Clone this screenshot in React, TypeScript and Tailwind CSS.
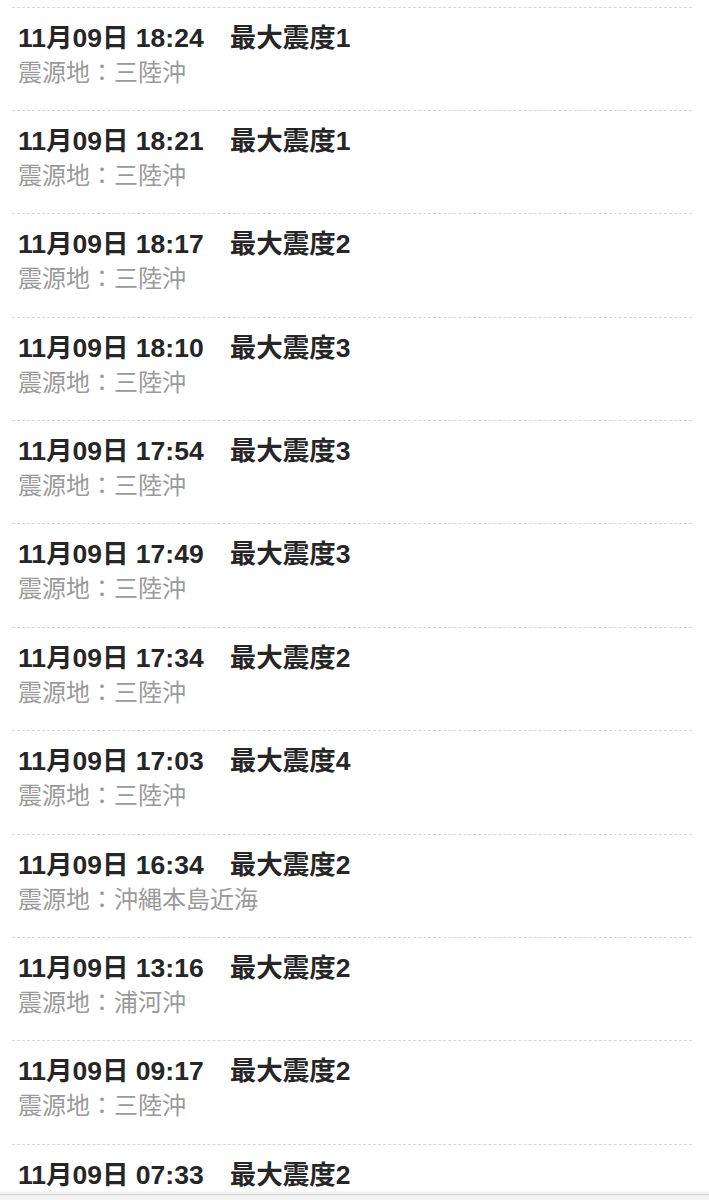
const quakes = [
  { time: "18:24", max: "1", place: "三陸沖" },
  { time: "18:21", max: "1", place: "三陸沖" },
  { time: "18:17", max: "2", place: "三陸沖" },
  { time: "18:10", max: "3", place: "三陸沖" },
  { time: "17:54", max: "3", place: "三陸沖" },
  { time: "17:49", max: "3", place: "三陸沖" },
  { time: "17:34", max: "2", place: "三陸沖" },
  { time: "17:03", max: "4", place: "三陸沖" },
  { time: "16:34", max: "2", place: "沖縄本島近海" },
  { time: "13:16", max: "2", place: "浦河沖" },
  { time: "09:17", max: "2", place: "三陸沖" },
  { time: "07:33", max: "2", place: "三陸沖" },
];

function QuakeRow({ time, max, place }: { time: string; max: string; place: string }) {
  return (
    <li className="h-[103.4px] shrink-0 border-t border-dashed border-[#d6d6d6] pl-[6px] pt-[15px]">
      <div className="flex text-[26.5px] font-bold leading-[30px] text-[#262626]">
        <span>11月09日 {time}</span>
        <span className="ml-[26px]">最大震度{max}</span>
      </div>
      <div className="mt-[5px] text-[24px] leading-[30px] text-[#9a9a9a]">震源地：{place}</div>
    </li>
  );
}

export default function App() {
  return (
    <div
      className="flex h-[1200px] w-[709px] flex-col overflow-hidden bg-white"
      style={{ fontFamily: '"Liberation Sans", "Noto Sans CJK JP", sans-serif' }}
    >
      <ul className="flex h-[1190px] flex-col overflow-hidden pt-[6.5px] pl-[12px] pr-[17px]">
        {quakes.map((q) => (
          <QuakeRow key={q.time} {...q} />
        ))}
      </ul>
      <div className="h-[4px] bg-gradient-to-b from-white to-[#f0f0f0]" />
      <div className="h-[6px] border-t border-[#d4d4d4] bg-[#f4f4f4]" />
    </div>
  );
}
